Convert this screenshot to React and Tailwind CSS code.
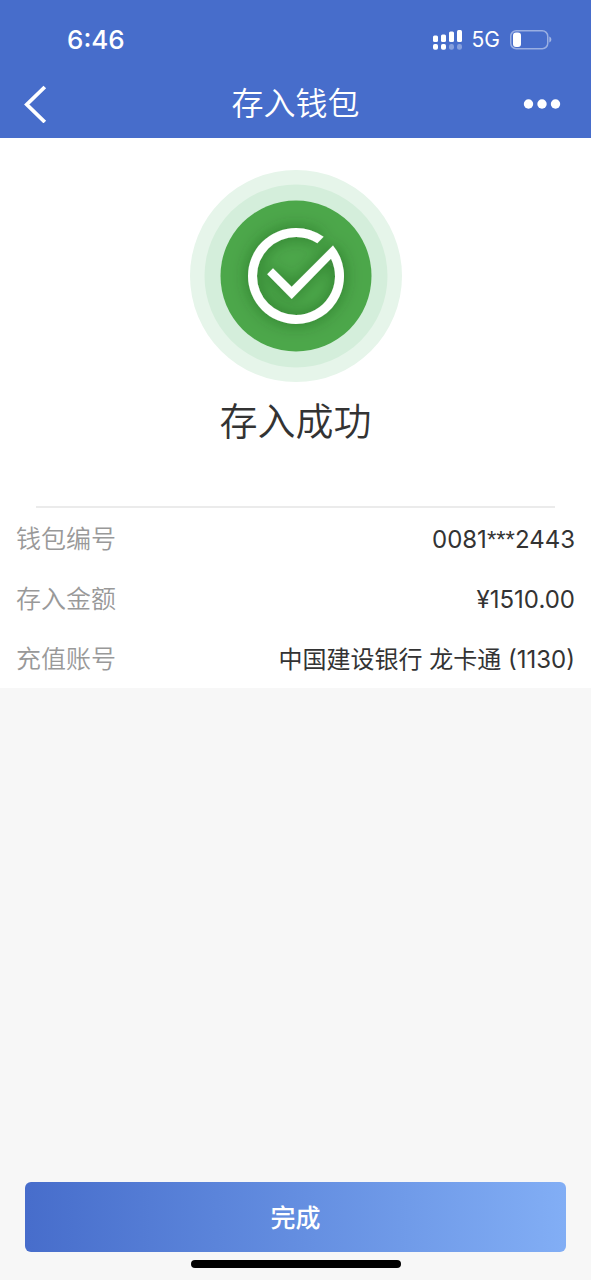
const DETAILS = [
  {
    label: '钱包编号',
    value: (
      <>
        0081<span className="font-['Liberation_Sans',sans-serif]">***</span>2443
      </>
    ),
  },
  { label: '存入金额', value: '¥1510.00' },
  { label: '充值账号', value: '中国建设银行 龙卡通 (1130)' },
];

function SignalIcon() {
  return (
    <svg width="29" height="21" viewBox="0 0 29 21" fill="#fff" aria-hidden="true">
      <rect x="0" y="5.5" width="5" height="6.5" rx="1.5" />
      <rect x="8" y="4.5" width="5" height="7.5" rx="1.5" />
      <rect x="16" y="1.5" width="5" height="10.5" rx="1.5" />
      <rect x="24" y="0" width="5" height="12" rx="1.5" />
      <rect x="0" y="14" width="5" height="5.8" rx="1.8" />
      <rect x="8" y="14" width="5" height="5.8" rx="1.8" />
      <rect x="16" y="14" width="5" height="5.8" rx="2.2" opacity="0.35" />
      <rect x="24" y="14" width="5" height="5.8" rx="2.2" opacity="0.35" />
    </svg>
  );
}

function BatteryIcon() {
  return (
    <svg width="42" height="20" viewBox="0 0 42 20" aria-hidden="true">
      <rect x="0.75" y="0.75" width="37" height="18" rx="5.5" fill="none" stroke="#fff" strokeOpacity="0.45" strokeWidth="1.5" />
      <path d="M39.3 6.5v6c1.3-.5 2-1.6 2-3s-.7-2.5-2-3z" fill="#fff" fillOpacity="0.5" />
      <rect x="3" y="2.5" width="8" height="14.5" rx="3" fill="#fff" />
    </svg>
  );
}

function StatusBar() {
  return (
    <div className="flex h-[68px] items-center justify-between pt-3 pr-[39px] pl-[67px]">
      <span className="text-[26px] leading-8 font-medium">6:46</span>
      <div className="flex items-center gap-2.5">
        <SignalIcon />
        <span className="text-[21px] leading-8">5G</span>
        <BatteryIcon />
      </div>
    </div>
  );
}

function NavBar() {
  return (
    <div className="grid h-[70px] grid-cols-[1fr_auto_1fr] items-center px-6 pt-0.5">
      <button type="button" aria-label="返回" className="justify-self-start">
        <svg width="23" height="38" viewBox="0 0 23 38" fill="none" stroke="#fff" strokeWidth="3.8">
          <path d="M20.8 2 2.8 19.5 20.8 37" />
        </svg>
      </button>
      <h1 className="text-[32px] leading-10 font-[350]">存入钱包</h1>
      <button type="button" aria-label="更多" className="justify-self-end pr-1.5">
        <svg width="38" height="10" viewBox="0 0 38 10" fill="#fff">
          <circle cx="5.5" cy="5" r="4.7" />
          <circle cx="19" cy="5" r="4.7" />
          <circle cx="32.5" cy="5" r="4.7" />
        </svg>
      </button>
    </div>
  );
}

function SuccessIcon() {
  return (
    <svg width="212" height="212" viewBox="0 0 212 212" aria-hidden="true">
      <defs>
        <filter id="tick-shadow" x="-40%" y="-40%" width="180%" height="180%">
          <feDropShadow dx="0" dy="0" stdDeviation="8" floodColor="#123f12" floodOpacity="0.5" />
        </filter>
      </defs>
      <circle cx="106" cy="106" r="106" fill="#e6f5ea" />
      <circle cx="106" cy="106" r="91.5" fill="#d4eedb" />
      <circle cx="106" cy="106" r="75.5" fill="#4ca74a" />
      <path
        d="M143 75.4A48 48 0 0 1 106 154A48 48 0 0 1 58 106A48 48 0 0 1 106 58A48 48 0 0 1 133.6 66.8L127.3 73.3A39 39 0 0 0 106 67A39 39 0 0 0 67 106A39 39 0 0 0 106 145A39 39 0 0 0 141 88.8L101.7 129 77.2 104.2 83 98.2 101.7 116.7Z"
        fill="#fff"
        filter="url(#tick-shadow)"
      />
    </svg>
  );
}

export default function App() {
  return (
    <div className="flex min-h-screen flex-col bg-[#f7f7f7] font-['Inter','Noto_Sans_CJK_SC',sans-serif] text-[#333]">
      <header className="bg-[#476dcb] text-white">
        <StatusBar />
        <NavBar />
      </header>

      <main className="bg-white pt-8">
        <div className="flex flex-col items-center">
          <SuccessIcon />
          <h2 className="mt-2.5 mb-14 text-[38px] leading-[58px] font-[350]">存入成功</h2>
        </div>
        <hr className="mx-9 border-t-2 border-[#ebebeb]" />
        <dl className="px-4">
          {DETAILS.map(({ label, value }) => (
            <div key={label} className="flex h-[60px] items-center justify-between pt-1">
              <dt className="text-[25px] font-[350] text-[#999]">{label}</dt>
              <dd className="text-2xl font-[390]">{value}</dd>
            </div>
          ))}
        </dl>
      </main>

      <footer className="mt-auto flex flex-col items-center px-[25px] pt-6 pb-3">
        <button
          type="button"
          className="h-[70px] w-full rounded-md bg-linear-to-r from-[#476dcb] to-[#82aef5] pt-1 text-[25px] font-medium text-white"
        >
          完成
        </button>
        <div className="mt-2 h-2 w-[210px] rounded-full bg-black" />
      </footer>
    </div>
  );
}
